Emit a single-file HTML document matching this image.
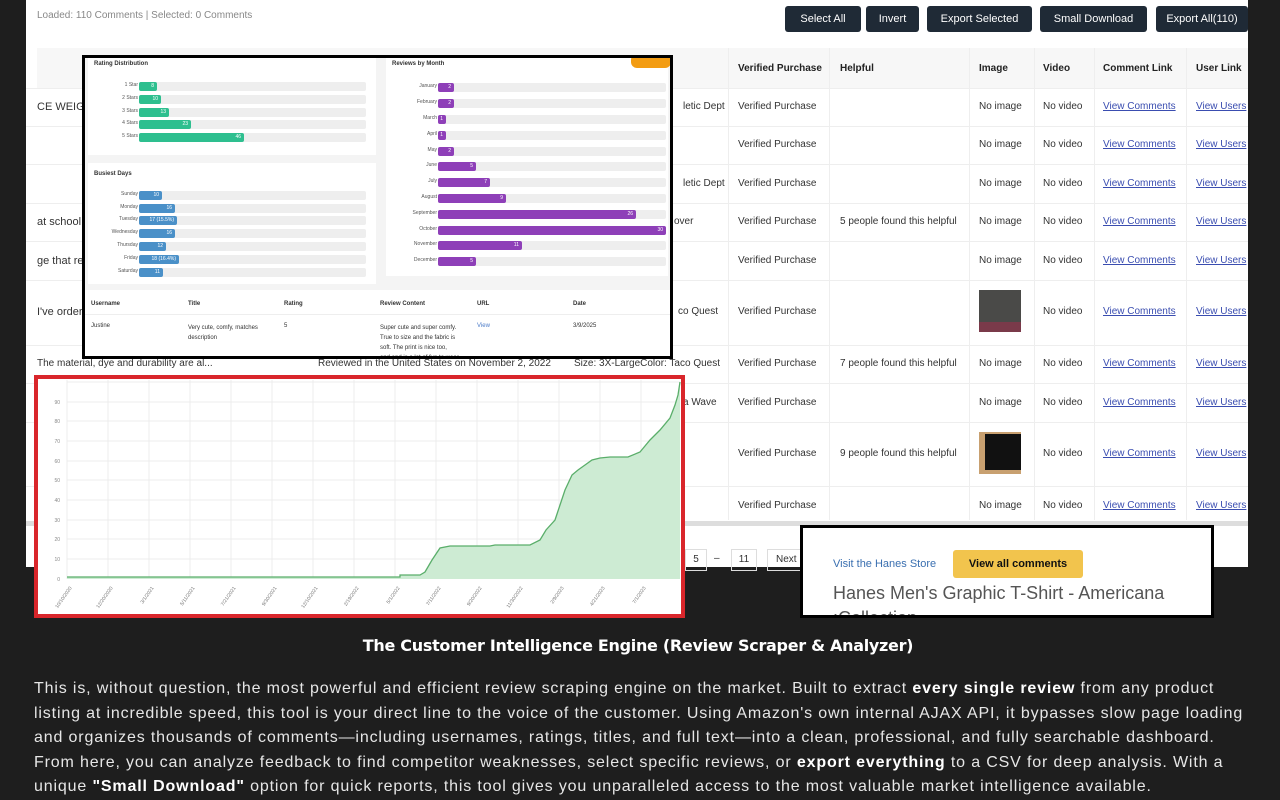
<!DOCTYPE html>
<html><head><meta charset="utf-8"><style>
*{margin:0;padding:0;box-sizing:border-box}
body{width:1280px;height:800px;background:#1e1e1e;position:relative;overflow:hidden;font-family:"Liberation Sans",Arial,sans-serif}
.a{position:absolute;white-space:nowrap}
.panel{position:absolute;left:26px;top:0;width:1222px;height:567px;background:#fff}
.btn{position:absolute;top:6px;height:26px;background:#1f2a36;color:#fff;font-size:11px;line-height:26px;text-align:center;border-radius:3px}
.t{font-size:10px;color:#333}
.lnk{font-size:10px;color:#3a4db0;text-decoration:underline}
.vl{position:absolute;top:48px;width:1px;height:472px;background:#eee}
.hl{position:absolute;left:26px;width:1222px;height:1px;background:#eee}
.ov{position:absolute;left:82px;top:55px;width:591px;height:304px;border:3px solid #000;background:#f4f4f4;overflow:hidden}
.card{position:absolute;background:#fff}
.lab{position:absolute;font-size:5px;color:#555;text-align:right}
.track{position:absolute;height:9px;background:#eeeeee;border-radius:2px}
.bar{position:absolute;height:9px;border-radius:2px;color:#fff;font-size:5px;text-align:right;padding-right:3px;line-height:9px}
.small{font-size:6px;color:#333;position:absolute}
</style></head><body>
<div class="panel"></div>
<div class="a" style="left:37px;top:10px;font-size:10px;color:#888">Loaded: 110 Comments | Selected: 0 Comments</div>
<div class="btn" style="left:785px;width:76px">Select All</div>
<div class="btn" style="left:866px;width:53px">Invert</div>
<div class="btn" style="left:927px;width:105px">Export Selected</div>
<div class="btn" style="left:1040px;width:107px">Small Download</div>
<div class="btn" style="left:1156px;width:92px">Export All(110)</div>
<div style="position:absolute;left:37px;top:48px;width:1211px;height:40px;background:#f7f7f7"></div>
<div class="a" style="left:738px;top:63px;font-size:10px;font-weight:bold;color:#222">Verified Purchase</div>
<div class="a" style="left:840px;top:63px;font-size:10px;font-weight:bold;color:#222">Helpful</div>
<div class="a" style="left:979px;top:63px;font-size:10px;font-weight:bold;color:#222">Image</div>
<div class="a" style="left:1043px;top:63px;font-size:10px;font-weight:bold;color:#222">Video</div>
<div class="a" style="left:1103px;top:63px;font-size:10px;font-weight:bold;color:#222">Comment Link</div>
<div class="a" style="left:1196px;top:63px;font-size:10px;font-weight:bold;color:#222">User Link</div>
<div class="vl" style="left:728px"></div><div class="vl" style="left:829px"></div><div class="vl" style="left:969px"></div><div class="vl" style="left:1034px"></div><div class="vl" style="left:1094px"></div><div class="vl" style="left:1186px"></div>
<div class="hl" style="top:88px"></div><div class="hl" style="top:126px"></div><div class="hl" style="top:164px"></div><div class="hl" style="top:203px"></div><div class="hl" style="top:241px"></div><div class="hl" style="top:280px"></div><div class="hl" style="top:345px"></div><div class="hl" style="top:383px"></div><div class="hl" style="top:422px"></div><div class="hl" style="top:486px"></div>
<div style="position:absolute;left:26px;top:521px;width:1222px;height:5px;background:#ddd"></div>

<div class="a t" style="left:37px;top:101px;font-size:11px">CE WEIGH</div>
<div class="a t" style="left:683px;top:101px">letic Dept</div>
<div class="a t" style="left:683px;top:178px">letic Dept</div>
<div class="a t" style="left:37px;top:216px;font-size:11px">at school.</div>
<div class="a t" style="left:674px;top:216px">over</div>
<div class="a t" style="left:37px;top:255px;font-size:11px">ge that re</div>
<div class="a t" style="left:37px;top:306px;font-size:11px">I've order</div>
<div class="a t" style="left:678px;top:306px">co Quest</div>
<div class="a t" style="left:37px;top:358px">The material, dye and durability are al...</div>
<div class="a t" style="left:318px;top:358px">Reviewed in the United States on November 2, 2022</div>
<div class="a t" style="left:574px;top:358px">Size: 3X-LargeColor: Taco Quest</div>
<div class="a t" style="left:683px;top:397px">a Wave</div>

<div class="a t" style="left:738px;top:101px">Verified Purchase</div>
<div class="a t" style="left:738px;top:139px">Verified Purchase</div>
<div class="a t" style="left:738px;top:178px">Verified Purchase</div>
<div class="a t" style="left:738px;top:216px">Verified Purchase</div>
<div class="a t" style="left:738px;top:255px">Verified Purchase</div>
<div class="a t" style="left:738px;top:306px">Verified Purchase</div>
<div class="a t" style="left:738px;top:358px">Verified Purchase</div>
<div class="a t" style="left:738px;top:397px">Verified Purchase</div>
<div class="a t" style="left:738px;top:448px">Verified Purchase</div>
<div class="a t" style="left:738px;top:500px">Verified Purchase</div>
<div class="a t" style="left:840px;top:216px">5 people found this helpful</div>
<div class="a t" style="left:840px;top:358px">7 people found this helpful</div>
<div class="a t" style="left:840px;top:448px">9 people found this helpful</div>

<div class="a t" style="left:979px;top:101px">No image</div>
<div class="a t" style="left:979px;top:139px">No image</div>
<div class="a t" style="left:979px;top:178px">No image</div>
<div class="a t" style="left:979px;top:216px">No image</div>
<div class="a t" style="left:979px;top:255px">No image</div>
<div style="position:absolute;left:979px;top:290px;width:42px;height:42px;background:#4a4a48"><div style="position:absolute;left:0;bottom:0;width:42px;height:10px;background:#7a3a4a"></div></div>
<div class="a t" style="left:979px;top:358px">No image</div>
<div class="a t" style="left:979px;top:397px">No image</div>
<div style="position:absolute;left:979px;top:432px;width:42px;height:42px;background:#c8a070"><div style="position:absolute;left:6px;top:2px;width:36px;height:36px;background:#111"></div></div>
<div class="a t" style="left:979px;top:500px">No image</div>

<div class="a t" style="left:1043px;top:101px">No video</div>
<div class="a t" style="left:1043px;top:139px">No video</div>
<div class="a t" style="left:1043px;top:178px">No video</div>
<div class="a t" style="left:1043px;top:216px">No video</div>
<div class="a t" style="left:1043px;top:255px">No video</div>
<div class="a t" style="left:1043px;top:306px">No video</div>
<div class="a t" style="left:1043px;top:358px">No video</div>
<div class="a t" style="left:1043px;top:397px">No video</div>
<div class="a t" style="left:1043px;top:448px">No video</div>
<div class="a t" style="left:1043px;top:500px">No video</div>

<div class="a lnk" style="left:1103px;top:101px">View Comments</div><div class="a lnk" style="left:1196px;top:101px">View Users</div>
<div class="a lnk" style="left:1103px;top:139px">View Comments</div><div class="a lnk" style="left:1196px;top:139px">View Users</div>
<div class="a lnk" style="left:1103px;top:178px">View Comments</div><div class="a lnk" style="left:1196px;top:178px">View Users</div>
<div class="a lnk" style="left:1103px;top:216px">View Comments</div><div class="a lnk" style="left:1196px;top:216px">View Users</div>
<div class="a lnk" style="left:1103px;top:255px">View Comments</div><div class="a lnk" style="left:1196px;top:255px">View Users</div>
<div class="a lnk" style="left:1103px;top:306px">View Comments</div><div class="a lnk" style="left:1196px;top:306px">View Users</div>
<div class="a lnk" style="left:1103px;top:358px">View Comments</div><div class="a lnk" style="left:1196px;top:358px">View Users</div>
<div class="a lnk" style="left:1103px;top:397px">View Comments</div><div class="a lnk" style="left:1196px;top:397px">View Users</div>
<div class="a lnk" style="left:1103px;top:448px">View Comments</div><div class="a lnk" style="left:1196px;top:448px">View Users</div>
<div class="a lnk" style="left:1103px;top:500px">View Comments</div><div class="a lnk" style="left:1196px;top:500px">View Users</div>

<div class="a t" style="left:685px;top:549px;width:22px;height:22px;border:1px solid #ddd;text-align:center;line-height:20px">5</div>
<div class="a t" style="left:714px;top:553px">–</div>
<div class="a t" style="left:731px;top:549px;width:26px;height:22px;border:1px solid #ddd;text-align:center;line-height:20px">11</div>
<div class="a t" style="left:767px;top:549px;width:40px;height:22px;border:1px solid #ddd;padding-left:8px;line-height:20px">Next</div>

<div class="ov">
 <div class="card" style="left:3px;top:0;width:288px;height:97px"></div>
 <div class="card" style="left:3px;top:105px;width:288px;height:121px"></div>
 <div class="card" style="left:301px;top:0;width:282px;height:218px"></div>
 <div class="card" style="left:0;top:232px;width:591px;height:72px"></div>
 <div class="small" style="left:9px;top:3px;font-weight:bold">Rating Distribution</div>
 <div class="small" style="left:9px;top:113px;font-weight:bold">Busiest Days</div>
 <div class="small" style="left:307px;top:3px;font-weight:bold">Reviews by Month</div>
 <div style="position:absolute;left:546px;top:-4px;width:40px;height:14px;background:#f39c12;border-radius:6px"></div>
 <div class="lab" style="left:20px;top:24px;width:33px">1 Star</div><div class="track" style="left:54px;top:24px;width:227px"></div><div class="bar" style="left:54px;top:24px;width:18px;background:#2ebf8f">8</div>
 <div class="lab" style="left:20px;top:37px;width:33px">2 Stars</div><div class="track" style="left:54px;top:37px;width:227px"></div><div class="bar" style="left:54px;top:37px;width:22px;background:#2ebf8f">10</div>
 <div class="lab" style="left:20px;top:50px;width:33px">3 Stars</div><div class="track" style="left:54px;top:50px;width:227px"></div><div class="bar" style="left:54px;top:50px;width:30px;background:#2ebf8f">13</div>
 <div class="lab" style="left:20px;top:62px;width:33px">4 Stars</div><div class="track" style="left:54px;top:62px;width:227px"></div><div class="bar" style="left:54px;top:62px;width:52px;background:#2ebf8f">23</div>
 <div class="lab" style="left:20px;top:75px;width:33px">5 Stars</div><div class="track" style="left:54px;top:75px;width:227px"></div><div class="bar" style="left:54px;top:75px;width:105px;background:#2ebf8f">46</div>
 <div class="lab" style="left:10px;top:133px;width:43px">Sunday</div><div class="track" style="left:54px;top:133px;width:227px"></div><div class="bar" style="left:54px;top:133px;width:23px;background:#4a90c8">10</div>
 <div class="lab" style="left:10px;top:146px;width:43px">Monday</div><div class="track" style="left:54px;top:146px;width:227px"></div><div class="bar" style="left:54px;top:146px;width:36px;background:#4a90c8">16</div>
 <div class="lab" style="left:10px;top:158px;width:43px">Tuesday</div><div class="track" style="left:54px;top:158px;width:227px"></div><div class="bar" style="left:54px;top:158px;width:38px;background:#4a90c8">17 (15.5%)</div>
 <div class="lab" style="left:10px;top:171px;width:43px">Wednesday</div><div class="track" style="left:54px;top:171px;width:227px"></div><div class="bar" style="left:54px;top:171px;width:36px;background:#4a90c8">16</div>
 <div class="lab" style="left:10px;top:184px;width:43px">Thursday</div><div class="track" style="left:54px;top:184px;width:227px"></div><div class="bar" style="left:54px;top:184px;width:27px;background:#4a90c8">12</div>
 <div class="lab" style="left:10px;top:197px;width:43px">Friday</div><div class="track" style="left:54px;top:197px;width:227px"></div><div class="bar" style="left:54px;top:197px;width:40px;background:#4a90c8">18 (16.4%)</div>
 <div class="lab" style="left:10px;top:210px;width:43px">Saturday</div><div class="track" style="left:54px;top:210px;width:227px"></div><div class="bar" style="left:54px;top:210px;width:24px;background:#4a90c8">11</div>
 <div class="lab" style="left:310px;top:25px;width:42px">January</div><div class="track" style="left:353px;top:25px;width:228px"></div><div class="bar" style="left:353px;top:25px;width:16px;background:#8e3fb8">2</div>
 <div class="lab" style="left:310px;top:41px;width:42px">February</div><div class="track" style="left:353px;top:41px;width:228px"></div><div class="bar" style="left:353px;top:41px;width:16px;background:#8e3fb8">2</div>
 <div class="lab" style="left:310px;top:57px;width:42px">March</div><div class="track" style="left:353px;top:57px;width:228px"></div><div class="bar" style="left:353px;top:57px;width:8px;background:#8e3fb8">1</div>
 <div class="lab" style="left:310px;top:73px;width:42px">April</div><div class="track" style="left:353px;top:73px;width:228px"></div><div class="bar" style="left:353px;top:73px;width:8px;background:#8e3fb8">1</div>
 <div class="lab" style="left:310px;top:89px;width:42px">May</div><div class="track" style="left:353px;top:89px;width:228px"></div><div class="bar" style="left:353px;top:89px;width:16px;background:#8e3fb8">2</div>
 <div class="lab" style="left:310px;top:104px;width:42px">June</div><div class="track" style="left:353px;top:104px;width:228px"></div><div class="bar" style="left:353px;top:104px;width:38px;background:#8e3fb8">5</div>
 <div class="lab" style="left:310px;top:120px;width:42px">July</div><div class="track" style="left:353px;top:120px;width:228px"></div><div class="bar" style="left:353px;top:120px;width:52px;background:#8e3fb8">7</div>
 <div class="lab" style="left:310px;top:136px;width:42px">August</div><div class="track" style="left:353px;top:136px;width:228px"></div><div class="bar" style="left:353px;top:136px;width:68px;background:#8e3fb8">9</div>
 <div class="lab" style="left:310px;top:152px;width:42px">September</div><div class="track" style="left:353px;top:152px;width:228px"></div><div class="bar" style="left:353px;top:152px;width:198px;background:#8e3fb8">26</div>
 <div class="lab" style="left:310px;top:168px;width:42px">October</div><div class="track" style="left:353px;top:168px;width:228px"></div><div class="bar" style="left:353px;top:168px;width:228px;background:#8e3fb8">30</div>
 <div class="lab" style="left:310px;top:183px;width:42px">November</div><div class="track" style="left:353px;top:183px;width:228px"></div><div class="bar" style="left:353px;top:183px;width:84px;background:#8e3fb8">11</div>
 <div class="lab" style="left:310px;top:199px;width:42px">December</div><div class="track" style="left:353px;top:199px;width:228px"></div><div class="bar" style="left:353px;top:199px;width:38px;background:#8e3fb8">5</div>
 <div class="small" style="left:6px;top:243px;font-weight:bold">Username</div>
 <div class="small" style="left:103px;top:243px;font-weight:bold">Title</div>
 <div class="small" style="left:199px;top:243px;font-weight:bold">Rating</div>
 <div class="small" style="left:295px;top:243px;font-weight:bold">Review Content</div>
 <div class="small" style="left:392px;top:243px;font-weight:bold">URL</div>
 <div class="small" style="left:488px;top:243px;font-weight:bold">Date</div>
 <div style="position:absolute;left:0;top:256px;width:591px;height:1px;background:#eee"></div>
 <div class="small" style="left:6px;top:265px">Justine</div>
 <div class="small" style="left:103px;top:265px;line-height:10px">Very cute, comfy, matches<br>description</div>
 <div class="small" style="left:199px;top:265px">5</div>
 <div class="small" style="left:295px;top:265px;line-height:10px">Super cute and super comfy.<br>True to size and the fabric is<br>soft. The print is nice too,<br>and and is a lot of fun to wear</div>
 <div class="small" style="left:392px;top:265px;color:#4a7ac8">View</div>
 <div class="small" style="left:488px;top:265px">3/9/2025</div>
</div>

<div style="position:absolute;left:34px;top:375px;width:651px;height:243px;border:4px solid #d9262b;background:#fff"></div>
<svg style="position:absolute;left:0;top:0" width="1280" height="800">
 <g stroke="#ececec" stroke-width="1">
  <line x1="67" y1="382" x2="680" y2="382"/><line x1="67" y1="402" x2="680" y2="402"/><line x1="67" y1="421" x2="680" y2="421"/><line x1="67" y1="441" x2="680" y2="441"/><line x1="67" y1="461" x2="680" y2="461"/><line x1="67" y1="480" x2="680" y2="480"/><line x1="67" y1="500" x2="680" y2="500"/><line x1="67" y1="520" x2="680" y2="520"/><line x1="67" y1="539" x2="680" y2="539"/><line x1="67" y1="559" x2="680" y2="559"/>
  <line x1="67" y1="380" x2="67" y2="579"/><line x1="108" y1="380" x2="108" y2="579"/><line x1="149" y1="380" x2="149" y2="579"/><line x1="190" y1="380" x2="190" y2="579"/><line x1="231" y1="380" x2="231" y2="579"/><line x1="272" y1="380" x2="272" y2="579"/><line x1="313" y1="380" x2="313" y2="579"/><line x1="354" y1="380" x2="354" y2="579"/><line x1="395" y1="380" x2="395" y2="579"/><line x1="436" y1="380" x2="436" y2="579"/><line x1="477" y1="380" x2="477" y2="579"/><line x1="518" y1="380" x2="518" y2="579"/><line x1="559" y1="380" x2="559" y2="579"/><line x1="600" y1="380" x2="600" y2="579"/><line x1="641" y1="380" x2="641" y2="579"/>
 </g>
 <g font-family="Liberation Sans" font-size="5" fill="#888" text-anchor="end">
  <text x="60" y="404">90</text><text x="60" y="423">80</text><text x="60" y="443">70</text><text x="60" y="463">60</text><text x="60" y="482">50</text><text x="60" y="502">40</text><text x="60" y="522">30</text><text x="60" y="541">20</text><text x="60" y="561">10</text><text x="60" y="581">0</text>
 </g>
 <path d="M67,577 L400,577 L400,575 L420,575 L425,572 L432,560 L440,548 L450,546 L490,546 L495,545 L530,545 L540,540 L546,530 L555,520 L565,490 L572,475 L578,470 L585,465 L592,460 L600,458 L610,457 L628,457 L640,452 L650,440 L660,430 L670,418 L675,405 L678,395 L680,382 L680,579 L67,579 Z" fill="#cdebd3" stroke="none"/>
 <path d="M67,577 L400,577 L400,575 L420,575 L425,572 L432,560 L440,548 L450,546 L490,546 L495,545 L530,545 L540,540 L546,530 L555,520 L565,490 L572,475 L578,470 L585,465 L592,460 L600,458 L610,457 L628,457 L640,452 L650,440 L660,430 L670,418 L675,405 L678,395 L680,382" fill="none" stroke="#5aae6a" stroke-width="1.3"/>
 <g font-family="Liberation Sans" font-size="5" fill="#777">
  <text transform="translate(72,588) rotate(-55)" text-anchor="end">10/10/2020</text>
  <text transform="translate(113,588) rotate(-55)" text-anchor="end">12/20/2020</text>
  <text transform="translate(154,588) rotate(-55)" text-anchor="end">3/1/2021</text>
  <text transform="translate(195,588) rotate(-55)" text-anchor="end">5/11/2021</text>
  <text transform="translate(236,588) rotate(-55)" text-anchor="end">7/21/2021</text>
  <text transform="translate(277,588) rotate(-55)" text-anchor="end">9/30/2021</text>
  <text transform="translate(318,588) rotate(-55)" text-anchor="end">12/10/2021</text>
  <text transform="translate(359,588) rotate(-55)" text-anchor="end">2/19/2022</text>
  <text transform="translate(400,588) rotate(-55)" text-anchor="end">5/1/2022</text>
  <text transform="translate(441,588) rotate(-55)" text-anchor="end">7/11/2022</text>
  <text transform="translate(482,588) rotate(-55)" text-anchor="end">9/20/2022</text>
  <text transform="translate(523,588) rotate(-55)" text-anchor="end">11/30/2022</text>
  <text transform="translate(564,588) rotate(-55)" text-anchor="end">2/9/2023</text>
  <text transform="translate(605,588) rotate(-55)" text-anchor="end">4/21/2023</text>
  <text transform="translate(646,588) rotate(-55)" text-anchor="end">7/1/2023</text>
 </g>
</svg>

<div style="position:absolute;left:800px;top:525px;width:414px;height:93px;border:3px solid #000;background:#fff;overflow:hidden">
 <div class="a" style="left:30px;top:30px;font-size:11px;color:#3a6fb0">Visit the Hanes Store</div>
 <div class="a" style="left:150px;top:22px;width:130px;height:28px;background:#f2c44d;border-radius:3px;font-size:11px;font-weight:bold;color:#111;text-align:center;line-height:28px">View all comments</div>
 <div class="a" style="left:30px;top:55px;font-size:18px;color:#555">Hanes Men's Graphic T-Shirt - Americana</div>
 <div class="a" style="left:30px;top:80px;font-size:18px;color:#555">:Collection</div>
</div>

<div class="a" style="left:0;width:1276px;top:636px;text-align:center;font-family:'DejaVu Sans',sans-serif;font-weight:bold;font-size:16px;color:#fff;letter-spacing:-0.3px">The Customer Intelligence Engine (Review Scraper &amp; Analyzer)</div>
<div style="position:absolute;left:34px;top:677px;width:1218px;font-size:16px;letter-spacing:0.85px;line-height:24.5px;color:#e6e6e6">This is, without question, the most powerful and efficient review scraping engine on the market. Built to extract <b style="color:#fff">every single review</b> from any product listing at incredible speed, this tool is your direct line to the voice of the customer. Using Amazon's own internal AJAX API, it bypasses slow page loading and organizes thousands of comments—including usernames, ratings, titles, and full text—into a clean, professional, and fully searchable dashboard. From here, you can analyze feedback to find competitor weaknesses, select specific reviews, or <b style="color:#fff">export everything</b> to a CSV for deep analysis. With a unique <b style="color:#fff">"Small Download"</b> option for quick reports, this tool gives you unparalleled access to the most valuable market intelligence available.</div>
</body></html>
